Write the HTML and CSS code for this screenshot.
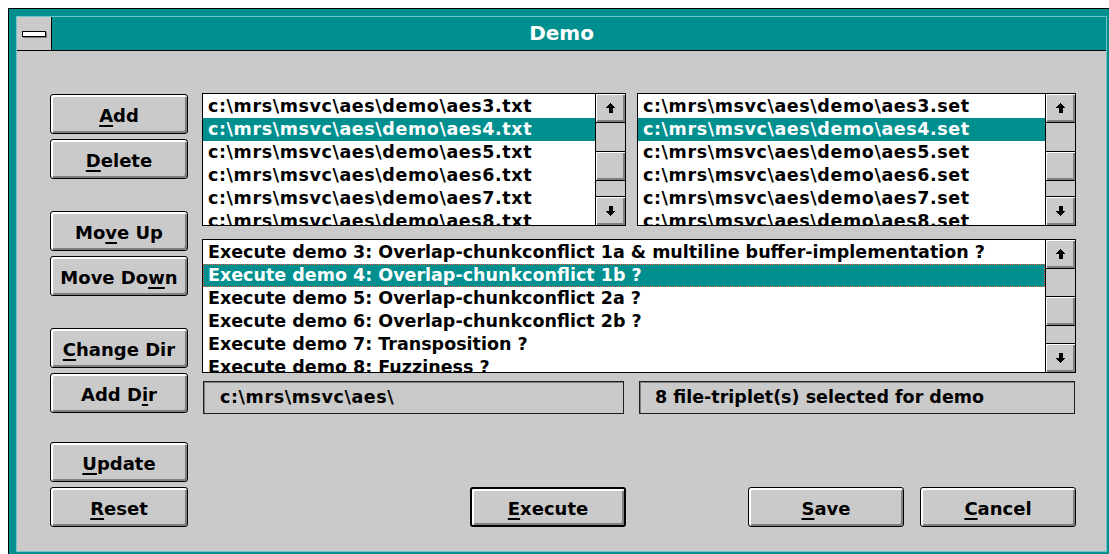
FILE: index.html
```html
<!DOCTYPE html>
<html lang="en">
<head>
<meta charset="utf-8">
<title>Demo</title>
<link rel="stylesheet" href="styles.css">
</head>
<body>
<div class="page">
  <div class="window">
    <div class="frame">
      <div class="titlebar">
        <div class="sysmenu"><span class="sysbar"></span></div>
        <div class="title">Demo</div>
      </div>
      <div class="client">
        <div class="side">
          <div class="group">
            <button class="btn"><span><u>A</u>dd</span></button>
            <button class="btn"><span><u>D</u>elete</span></button>
          </div>
          <div class="group group-gap">
            <button class="btn"><span>Mo<u>v</u>e Up</span></button>
            <button class="btn"><span>Move Do<u>w</u>n</span></button>
          </div>
          <div class="group group-gap">
            <button class="btn"><span><u>C</u>hange Dir</span></button>
            <button class="btn"><span>Add D<u>i</u>r</span></button>
          </div>
          <div class="group group-gap-sm">
            <button class="btn"><span><u>U</u>pdate</span></button>
            <button class="btn"><span><u>R</u>eset</span></button>
          </div>
        </div>

        <div class="main">
          <div class="lists-top">
            <div class="listbox lb-files paths">
              <div class="items">
                <div class="item">c:\mrs\msvc\aes\demo\aes3.txt</div>
                <div class="item sel">c:\mrs\msvc\aes\demo\aes4.txt</div>
                <div class="item">c:\mrs\msvc\aes\demo\aes5.txt</div>
                <div class="item">c:\mrs\msvc\aes\demo\aes6.txt</div>
                <div class="item">c:\mrs\msvc\aes\demo\aes7.txt</div>
                <div class="item">c:\mrs\msvc\aes\demo\aes8.txt</div>
              </div>
              <div class="scroll">
                <div class="sb-btn sb-up"><svg class="arrow" viewBox="0 0 11 10" width="11" height="10"><path d="M5.5 0L11 5H7.5V10H3.5V5H0Z"/></svg></div>
                <div class="track track-a"></div>
                <div class="thumb"></div>
                <div class="track track-b"></div>
                <div class="sb-btn sb-down"><svg class="arrow" viewBox="0 0 11 10" width="11" height="10"><path d="M5.5 10L11 5H7.5V0H3.5V5H0Z"/></svg></div>
              </div>
            </div>
            <div class="listbox lb-sets paths">
              <div class="items">
                <div class="item">c:\mrs\msvc\aes\demo\aes3.set</div>
                <div class="item sel">c:\mrs\msvc\aes\demo\aes4.set</div>
                <div class="item">c:\mrs\msvc\aes\demo\aes5.set</div>
                <div class="item">c:\mrs\msvc\aes\demo\aes6.set</div>
                <div class="item">c:\mrs\msvc\aes\demo\aes7.set</div>
                <div class="item">c:\mrs\msvc\aes\demo\aes8.set</div>
              </div>
              <div class="scroll">
                <div class="sb-btn sb-up"><svg class="arrow" viewBox="0 0 11 10" width="11" height="10"><path d="M5.5 0L11 5H7.5V10H3.5V5H0Z"/></svg></div>
                <div class="track track-a"></div>
                <div class="thumb"></div>
                <div class="track track-b"></div>
                <div class="sb-btn sb-down"><svg class="arrow" viewBox="0 0 11 10" width="11" height="10"><path d="M5.5 10L11 5H7.5V0H3.5V5H0Z"/></svg></div>
              </div>
            </div>
          </div>

          <div class="listbox lb-demos">
            <div class="items">
              <div class="item">Execute demo 3: Overlap-chunkconflict 1a &amp; multiline buffer-implementation ?</div>
              <div class="item sel focus">Execute demo 4: Overlap-chunkconflict 1b ?</div>
              <div class="item">Execute demo 5: Overlap-chunkconflict 2a ?</div>
              <div class="item">Execute demo 6: Overlap-chunkconflict 2b ?</div>
              <div class="item">Execute demo 7: Transposition ?</div>
              <div class="item">Execute demo 8: Fuzziness ?</div>
            </div>
            <div class="scroll">
              <div class="sb-btn sb-up"><svg class="arrow" viewBox="0 0 11 10" width="11" height="10"><path d="M5.5 0L11 5H7.5V10H3.5V5H0Z"/></svg></div>
              <div class="track track-a"></div>
              <div class="thumb"></div>
              <div class="track track-b"></div>
              <div class="sb-btn sb-down"><svg class="arrow" viewBox="0 0 11 10" width="11" height="10"><path d="M5.5 10L11 5H7.5V0H3.5V5H0Z"/></svg></div>
            </div>
          </div>

          <div class="fields">
            <div class="field field-path paths">c:\mrs\msvc\aes\</div>
            <div class="field field-status">8 file-triplet(s) selected for demo</div>
          </div>

          <div class="actions">
            <button class="btn btn-wide btn-default"><span><u>E</u>xecute</span></button>
            <button class="btn btn-wide btn-save"><span><u>S</u>ave</span></button>
            <button class="btn btn-wide btn-cancel"><span><u>C</u>ancel</span></button>
          </div>
        </div>
      </div>
    </div>
  </div>
</div>
</body>
</html>
```

FILE: styles.css
```css
/* Windows 3.x style dialog */
html, body {
  margin: 0;
  background: #fff;
  overflow: hidden;
}

body {
  font-family: "DejaVu Sans", "Liberation Sans", sans-serif;
  font-weight: bold;
  font-size: 18px;
  color: #000;
}

.page {
  padding: 8px 0 0 8px;
}

/* window frame: black edge, teal sizing border, light inner edge */
.window {
  width: 1107px;
  box-sizing: border-box;
  border: 1px solid #000;
  background: #008f8f;
  padding: 7px;
}

.frame {
  border: 1px solid #6cc6c6;
}

/* caption */
.titlebar {
  display: flex;
  height: 33px;
  background: #008f8f;
  border-bottom: 1px solid #000;
}

.sysmenu {
  width: 34px;
  background: #cacaca;
  border-right: 1px solid #000;
  display: flex;
  align-items: center;
  justify-content: center;
}

.sysbar {
  display: block;
  width: 22px;
  height: 4px;
  background: #fff;
  border: 1px solid #000;
  box-shadow: 1px 1px 0 #7a7a7a;
}

.title {
  flex: 1;
  text-align: center;
  line-height: 33px;
  font-size: 20px;
  color: #fff;
  padding-right: 35px;
}

/* dialog body */
.client {
  display: flex;
  height: 500px;
  background: #cacaca;
}

.side {
  margin-left: 33px;
  width: 138px;
  padding-top: 43px;
  display: flex;
  flex-direction: column;
}

.group {
  display: flex;
  flex-direction: column;
  gap: 5px;
}

.group-gap {
  margin-top: 32px;
}

.group-gap-sm {
  margin-top: 29px;
}

/* push buttons */
.btn {
  height: 40px;
  width: 100%;
  box-sizing: border-box;
  padding: 0;
  margin: 0;
  border: 1px solid #000;
  border-radius: 3px;
  background: #cacaca;
  box-shadow: inset 2px 2px 0 #fff, inset -2px -2px 0 #808080;
  display: flex;
  align-items: center;
  justify-content: center;
  font: inherit;
  color: #000;
}

.btn span {
  position: relative;
  top: 1px;
}

.btn-default {
  border-width: 2px;
}

u {
  text-decoration-thickness: 2px;
  text-underline-offset: 3px;
}

.main {
  margin-left: 14px;
  padding-top: 42px;
  width: 874px;
  display: flex;
  flex-direction: column;
  font-size: 17.5px;
}

.paths {
  letter-spacing: 0.6px;
}

.lists-top {
  display: flex;
}

/* list boxes */
.listbox {
  box-sizing: border-box;
  border: 1px solid #000;
  background: #fff;
  display: flex;
}

.lb-files {
  width: 424px;
  height: 133px;
}

.lb-sets {
  width: 439px;
  height: 133px;
  margin-left: 11px;
}

.lb-demos {
  width: 874px;
  height: 134px;
  margin-top: 13px;
}

.items {
  flex: 1;
  min-width: 0;
  overflow: hidden;
  padding-top: 1px;
}

.item {
  height: 23px;
  line-height: 23px;
  padding-left: 5px;
  white-space: nowrap;
  box-sizing: border-box;
}

.item.sel {
  background: #008f8f;
  color: #fff;
}

.item.focus {
  outline: 1px dotted #e0603a;
  outline-offset: -1px;
}

/* scroll bars */
.scroll {
  width: 29px;
  flex: 0 0 29px;
  border-left: 1px solid #000;
  background: #cacaca;
  display: flex;
  flex-direction: column;
}

.sb-btn {
  flex: 0 0 28px;
  height: 28px;
  box-shadow: inset 1px 1px 0 #fff, inset -2px -2px 0 #808080;
  display: flex;
  align-items: center;
  justify-content: center;
}

.sb-up {
  border-bottom: 1px solid #000;
}

.sb-down {
  border-top: 1px solid #000;
}

.arrow {
  display: block;
  shape-rendering: crispEdges;
}

.arrow path {
  fill: #000;
}

.track {
  background: #cacaca;
}

.thumb {
  flex: 0 0 28px;
  border-top: 1px solid #000;
  border-bottom: 1px solid #000;
  box-shadow: inset 1px 1px 0 #fff, inset -2px -2px 0 #808080;
}

.lb-files .track-a,
.lb-sets .track-a {
  flex: 0 0 28px;
}

.lb-demos .track-a {
  flex: 0 0 27px;
}

.track-b {
  flex: 1;
}

/* static text frames */
.fields {
  display: flex;
  margin-top: 8px;
  height: 33px;
}

.field {
  box-sizing: border-box;
  height: 33px;
  border: 1px solid #1e1e1e;
  box-shadow: inset 1px 1px 0 #808080;
  line-height: 31px;
  white-space: nowrap;
}

.field-path {
  width: 421px;
  margin-left: 1px;
  padding-left: 16px;
}

.field-status {
  width: 436px;
  margin-left: 15px;
  padding-left: 15px;
}

/* bottom command row */
.actions {
  display: flex;
  margin-top: 73px;
  font-size: 18px;
}

.btn-wide {
  width: 156px;
}

.btn-default {
  margin-left: 268px;
}

.btn-save {
  margin-left: 122px;
}

.btn-cancel {
  margin-left: 16px;
}
```
